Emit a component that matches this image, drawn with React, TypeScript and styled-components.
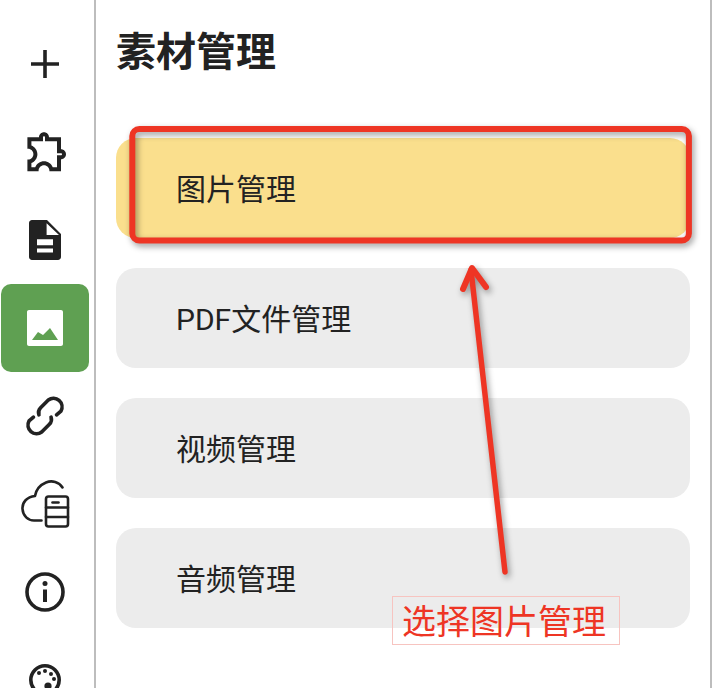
import * as React from "react";
import styled, { createGlobalStyle } from "styled-components";

const GlobalStyle = createGlobalStyle`
  html, body {
    margin: 0;
    padding: 0;
    background: #fff;
    overflow: hidden;
  }
  body {
    font-family: Roboto, "Noto Sans CJK SC", "Noto Sans", sans-serif;
    color: #222;
  }
`;

const Page = styled.div`
  position: relative;
  display: flex;
  width: 728px;
  height: 688px;
  overflow: hidden;
`;

const Sidebar = styled.nav`
  flex: none;
  box-sizing: border-box;
  width: 96px;
  height: 688px;
  padding: 20px 0 0 1px;
  border-right: 2px solid #bdbdbd;
  display: flex;
  flex-direction: column;
`;

const NavItem = styled.div<{ $active?: boolean }>`
  flex: none;
  width: 88px;
  height: 88px;
  border-radius: 10px;
  display: flex;
  align-items: center;
  justify-content: center;
  color: ${(p) => (p.$active ? "#fff" : "#222")};
  background: ${(p) => (p.$active ? "#5fa052" : "transparent")};
`;

const Main = styled.main`
  flex: none;
  box-sizing: border-box;
  width: 616px;
  height: 688px;
  padding: 0 20px;
  border-right: 2px solid #bdbdbd;
`;

const Title = styled.h1`
  margin: 0;
  height: 138px;
  padding-top: 24px;
  box-sizing: border-box;
  font-size: 40px;
  line-height: 58px;
  font-weight: 700;
  color: #222;
`;

const List = styled.div`
  display: flex;
  flex-direction: column;
  gap: 30px;
`;

const Row = styled.div<{ $selected?: boolean }>`
  height: 98px;
  padding: 0 0 2px 60px;
  border-radius: 20px;
  display: flex;
  align-items: center;
  font-size: 30px;
  color: #222;
  background: ${(p) => (p.$selected ? "#fadf8d" : "#ececec")};
`;

const Markup = styled.svg`
  position: absolute;
  left: 0;
  top: 0;
  filter: drop-shadow(2px 3px 3px rgba(0, 0, 0, 0.4));
  pointer-events: none;
`;

const Callout = styled.div`
  position: absolute;
  left: 392px;
  top: 596px;
  box-sizing: border-box;
  width: 228px;
  height: 49px;
  padding: 0 0 3px 9px;
  border: 1px solid #f7c4c0;
  display: flex;
  align-items: center;
  font-size: 34px;
  color: #ee3524;
  white-space: nowrap;
`;

const Glyph: React.FC<{ children: React.ReactNode }> = ({ children }) => (
  <svg width="48" height="48" viewBox="0 0 24 24" fill="currentColor">
    {children}
  </svg>
);

const PlusIcon = () => (
  <Glyph>
    <path d="M11.100 5h1.800v6.100H19v1.800h-6.100V19h-1.800v-6.100H5v-1.800h6.100z" />
  </Glyph>
);

const PuzzleIcon = () => (
  <Glyph>
    <path
      transform="translate(1 -0.4)"
      fillRule="evenodd"
      d="M10.500 2.500C9.120 2.500 8 3.620 8 5H2.200v5.800h.3c1.490 0 2.700 1.210 2.700 2.700s-1.210 2.700-2.700 2.700h-.3V22h5.600v-.3c0-1.490 1.210-2.700 2.700-2.700s2.700 1.210 2.700 2.700v.3H19v-6c1.380 0 2.500-1.120 2.500-2.500S20.380 11 19 11V5h-6c0-1.380-1.120-2.500-2.500-2.500zm0 2c.28 0 .5.220.5.500v2h6v6h2c.28 0 .5.220.5.500s-.22.500-.5.500h-2v6h-2.120c-.68-1.750-2.390-3-4.380-3s-3.700 1.250-4.380 3H4.200v-2.120c1.750-.68 3-2.390 3-4.380S5.950 9.800 4.200 9.120V7H10V5c0-.28.22-.5.500-.5z"
    />
  </Glyph>
);

const DocIcon = () => (
  <Glyph>
    <path
      fillRule="evenodd"
      d="M13 2H5.500C4.670 2 4 2.670 4 3.500v17c0 .83.67 1.500 1.500 1.500h13c.83 0 1.500-.67 1.500-1.500V9zM12.800 3.600 19 9.500h-6.200zM8 11.600h8v3H8zM8 16.200h8v2H8z"
    />
  </Glyph>
);

const ImageIcon = () => (
  <Glyph>
    <path
      fillRule="evenodd"
      d="M4 3h16c.55 0 1 .45 1 1v16c0 .55-.45 1-1 1H4c-.55 0-1-.45-1-1V4c0-.55.45-1 1-1zm4.500 11L5.500 18h13l-4-6-3.500 3.500z"
    />
  </Glyph>
);

const LinkIcon = () => (
  <svg width="66" height="66" viewBox="15 386 60 60" fill="none" stroke="currentColor" strokeWidth="3.300" strokeLinecap="round" strokeLinejoin="round">
    <path d="M39.500 415C38.500 412 39.500 410 41 408.500L48 401.500A7.800 7.800 0 0 1 59.500 411.500L55.500 415" />
    <path d="M50.500 417C51.500 420 50.500 422 49 423.500L42 430.500A7.800 7.800 0 0 1 30.500 420.500L34.500 417" />
  </svg>
);

const CloudIcon = () => (
  <svg width="60" height="60" viewBox="15 474 60 60" fill="none" stroke="currentColor" strokeWidth="2.600" strokeLinecap="round" strokeLinejoin="round">
    <path d="M62.500 487.500C59 482 52 480 46 482.500C40 485 36 490 35 496C27 497 22 502 22.500 509C23 516 28 520.500 34 520.500H41.500" />
    <rect x="46" y="496.500" width="22" height="30" rx="2.500" />
    <path d="M46 507.500H68M46 517H68" />
    <path d="M52.500 502.500H58.500" />
  </svg>
);

const InfoIcon = () => (
  <svg width="48" height="48" viewBox="0 0 48 48" fill="currentColor">
    <circle cx="24" cy="24" r="18" fill="none" stroke="currentColor" strokeWidth="3.600" />
    <rect x="22" y="21.500" width="4" height="12.500" />
    <circle cx="24" cy="15.500" r="2.500" />
  </svg>
);

const PaletteIcon = () => (
  <Glyph>
    <circle cx="12" cy="12" r="7.100" fill="none" stroke="currentColor" strokeWidth="1.800" />
    <circle cx="9" cy="8.500" r="1" />
    <circle cx="12" cy="7.500" r="1" />
    <circle cx="15" cy="9" r="1" />
    <circle cx="16.500" cy="11.500" r="1" />
    <circle cx="13.500" cy="15" r="1.800" />
  </Glyph>
);

const navItems = [
  { id: "add", icon: <PlusIcon /> },
  { id: "plugin", icon: <PuzzleIcon /> },
  { id: "doc", icon: <DocIcon /> },
  { id: "image", icon: <ImageIcon />, active: true },
  { id: "link", icon: <LinkIcon /> },
  { id: "cloud", icon: <CloudIcon /> },
  { id: "info", icon: <InfoIcon /> },
  { id: "palette", icon: <PaletteIcon /> },
];

const rows = ["图片管理", "PDF文件管理", "视频管理", "音频管理"];

const App: React.FC = () => {
  return (
    <Page>
      <GlobalStyle />
      <Sidebar>
        {navItems.map((item) => (
          <NavItem key={item.id} $active={item.active}>
            {item.icon}
          </NavItem>
        ))}
      </Sidebar>
      <Main>
        <Title>素材管理</Title>
        <List>
          {rows.map((label, i) => (
            <Row key={label} $selected={i === 0}>
              {label}
            </Row>
          ))}
        </List>
      </Main>
      {/* annotation drawn over the screenshot */}
      <Markup width="728" height="688" viewBox="0 0 728 688" fill="none" stroke="#ee3524" strokeLinecap="round" strokeLinejoin="round">
        <rect x="132.300" y="129" width="556.600" height="111.500" rx="7" strokeWidth="6" />
        <path d="M505 572L471 270" strokeWidth="5.500" />
        <path d="M463 289L472 268L486 287" strokeWidth="6" />
      </Markup>
      <Callout>选择图片管理</Callout>
    </Page>
  );
};

export default App;
